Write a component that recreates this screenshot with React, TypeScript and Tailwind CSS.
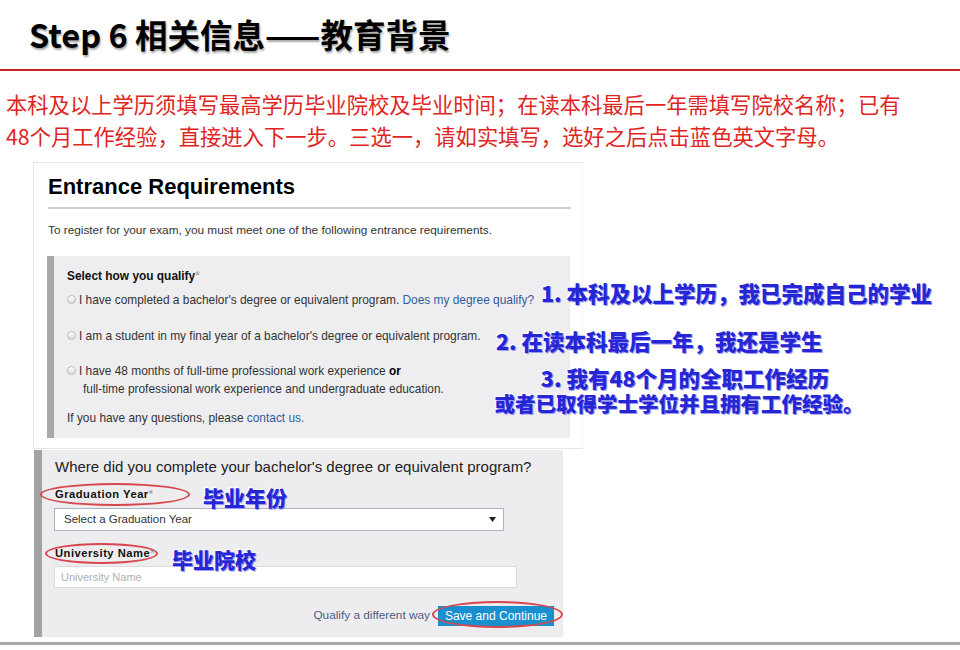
import React from "react";

const cjk = "font-['Noto_Sans_CJK_SC',sans-serif]";
const arial = "font-['Liberation_Sans',Arial,sans-serif]";
const note =
  "absolute whitespace-nowrap font-['Noto_Sans_CJK_SC',sans-serif] font-black text-[#2626d4] [text-shadow:1px_1px_0_#9a9af5,-1px_-1px_0_#ffffff]";

function Radio() {
  return (
    <span className="inline-block w-[9px] h-[9px] mr-[3px] rounded-full border border-[#b9b9b9] bg-gradient-to-b from-white to-[#dcdcdc] align-[0px]" />
  );
}

function Entrance() {
  return (
    <div className={`ml-[33px] w-[550px] h-[287px] border border-[#e6e6e6] border-r-[#f6f6f6] bg-white pl-[14px] pr-[11px] ${arial}`}>
      <h2 className="pt-[11px] text-[22px] leading-[26px] font-bold text-black">Entrance Requirements</h2>
      <div className="mt-[7px] h-[2px] bg-[#cfcfcf]" />
      <p className="mt-[14px] text-[11.8px] leading-[14px] text-[#333]">
        To register for your exam, you must meet one of the following entrance requirements.
      </p>
      <div className="mt-[19px] -ml-[1px] mr-[1px] h-[182px] border-l-[7px] border-[#a8a8a8] bg-[#eeeef0] pl-[13px] pt-[13px] text-[11.9px] text-[#333]">
        <div className="leading-[14px] font-bold text-[#111]">
          Select how you qualify<span className="font-normal text-[#999]">*</span>
        </div>
        <div className="mt-[10px] leading-[14px]">
          <Radio />I have completed a bachelor's degree or equivalent program.{" "}
          <span className="text-[#2f5d9c]">Does my degree qualify?</span>
        </div>
        <div className="mt-[22px] leading-[14px]">
          <Radio />I am a student in my final year of a bachelor's degree or equivalent program.
        </div>
        <div className="mt-[19px] leading-[18px]">
          <div>
            <Radio />I have 48 months of full-time professional work experience <b className="text-black">or</b>
          </div>
          <div className="pl-[16px]">full-time professional work experience and undergraduate education.</div>
        </div>
        <div className="mt-[13px] leading-[14px]">
          If you have any questions, please <span className="text-[#2f5d9c]">contact us.</span>
        </div>
      </div>
    </div>
  );
}

function Education() {
  return (
    <div className={`mt-[1px] ml-[34px] w-[529px] h-[187px] border-l-[8px] border-[#a3a3a3] bg-[#ededef] pl-[13px] pt-[8px] ${arial}`}>
      <div className="text-[15px] leading-[18px] text-[#222]">
        Where did you complete your bachelor's degree or equivalent program?
      </div>
      <div className="mt-[11px] text-[11.2px] leading-[14px] font-bold tracking-[0.5px] text-[#111]">
        Graduation Year<span className="font-normal text-[#888]">*</span>
      </div>
      <div className="mt-[7px] -ml-[1px] w-[450px] h-[23px] flex items-center justify-between border border-[#a9b4c4] bg-white pl-[9px] pr-[7px] text-[11.5px] text-[#333]">
        <span>Select a Graduation Year</span>
        <svg width="7" height="5" viewBox="0 0 7 5">
          <path d="M0 0h7L3.5 5z" fill="#222" />
        </svg>
      </div>
      <div className="mt-[15px] text-[11.2px] leading-[14px] font-bold tracking-[0.5px] text-[#111]">
        University Name<span className="font-normal text-[#888]">*</span>
      </div>
      <div className="mt-[6px] -ml-[1px] w-[463px] h-[22px] flex items-center border border-[#dcdcdc] bg-white pl-[6px] text-[11px] text-[#b0b0b0]">
        University Name
      </div>
      <div className="mt-[18px] flex items-center justify-end gap-[8px] pr-[9px]">
        <span className="text-[11.8px] text-[#4a5d85]">Qualify a different way</span>
        <span className="h-[20px] px-[7px] flex items-center bg-[#1a8fd0] text-[12px] text-white">Save and Continue</span>
      </div>
    </div>
  );
}

export default function App() {
  return (
    <div className="relative w-[960px] h-[650px] overflow-hidden bg-white">
      <div className="h-[69px] pl-[29px] flex items-center">
        <h1 className={`${cjk} text-[32.5px] font-bold text-black leading-none [text-shadow:1px_2px_2px_rgba(0,0,0,0.35)]`}>
          Step 6 相关信息——教育背景
        </h1>
      </div>
      <div className="h-[2px] bg-[#c8242b]" />
      <p className={`${cjk} mt-[17px] pl-[6px] text-[21.3px] leading-[32px] text-[#e0251f]`}>
        本科及以上学历须填写最高学历毕业院校及毕业时间；在读本科最后一年需填写院校名称；已有
        <br />
        48个月工作经验，直接进入下一步。三选一，请如实填写，选好之后点击蓝色英文字母。
      </p>
      <div className="mt-[10px]">
        <Entrance />
        <Education />
      </div>
      <div className="mt-[5px] h-[3px] bg-[#a9a9a9]" />

      {/* annotations */}
      <div className="absolute left-[40px] top-[483px] w-[150px] h-[23px] rounded-[50%] border-2 border-[#d8454c]" />
      <div className="absolute left-[45px] top-[543px] w-[113px] h-[21px] rounded-[50%] border-2 border-[#d8454c]" />
      <div className="absolute left-[432px] top-[601px] w-[131px] h-[27px] rounded-[50%] border-2 border-[#d8454c]" />

      <div className={`${note} left-[541px] top-[282px] text-[21.5px] leading-[22px]`}>1. 本科及以上学历，我已完成自己的学业</div>
      <div className={`${note} left-[496px] top-[330px] text-[21.5px] leading-[22px]`}>2. 在读本科最后一年，我还是学生</div>
      <div className={`${note} left-[489px] top-[365px] w-[380px] text-center text-[20.5px] leading-[25px]`}>
        <span className="ml-[12px] text-[21.5px]">3. 我有48个月的全职工作经历</span>
        <br />
        或者已取得学士学位并且拥有工作经验。
      </div>
      <div className={`${note} left-[203px] top-[486px] text-[21px] leading-[22px]`}>毕业年份</div>
      <div className={`${note} left-[172px] top-[548px] text-[21px] leading-[22px]`}>毕业院校</div>
    </div>
  );
}
